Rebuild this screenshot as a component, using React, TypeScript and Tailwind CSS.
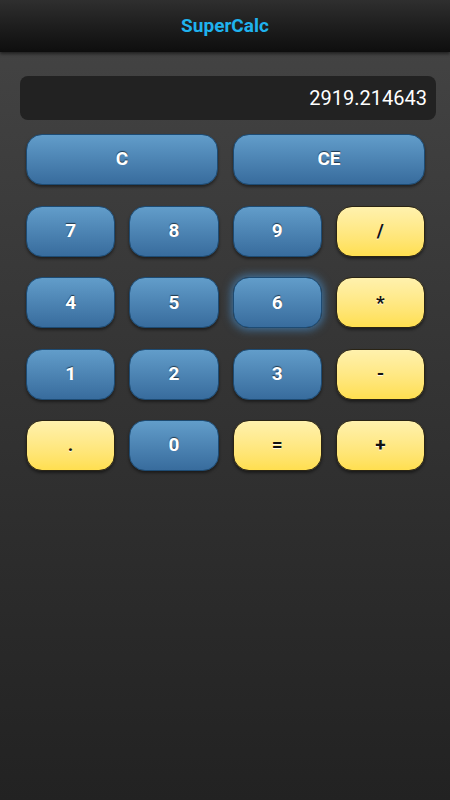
import React from "react"

type Key = { label: string; kind: "blue" | "yellow"; focused?: boolean }

const rows: Key[][] = [
    [{ label: "7", kind: "blue" }, { label: "8", kind: "blue" }, { label: "9", kind: "blue" }, { label: "/", kind: "yellow" }],
    [{ label: "4", kind: "blue" }, { label: "5", kind: "blue" }, { label: "6", kind: "blue", focused: true }, { label: "*", kind: "yellow" }],
    [{ label: "1", kind: "blue" }, { label: "2", kind: "blue" }, { label: "3", kind: "blue" }, { label: "-", kind: "yellow" }],
    [{ label: ".", kind: "yellow" }, { label: "0", kind: "blue" }, { label: "=", kind: "yellow" }, { label: "+", kind: "yellow" }],
]

function CalcButton({ label, kind, focused }: Key) {
    const base = "h-[51px] w-full rounded-[16px] text-[19px] font-bold flex items-center justify-center"
    if (kind === "yellow") {
        return (
            <button className={`${base} border border-[#2a2414] bg-gradient-to-b from-[#fff1ad] to-[#ffdf4f] text-[#111] shadow-[0_2px_3px_rgba(0,0,0,0.45)] [text-shadow:0_1px_0_rgba(255,255,255,0.8)]`}>
                {label}
            </button>
        )
    }
    return (
        <button
            className={`${base} border border-[#1d4b73] bg-gradient-to-b from-[#629dca] to-[#386c9d] text-white [text-shadow:0_-1px_1px_rgba(0,0,0,0.6)] ${
                focused ? "shadow-[0_0_8px_2px_rgba(70,150,220,0.6)]" : "shadow-[0_2px_3px_rgba(0,0,0,0.45)]"
            }`}
        >
            {label}
        </button>
    )
}

export default function App() {
    return (
        <div className="w-[450px] h-[800px] flex flex-col font-['Roboto',sans-serif] bg-gradient-to-b from-[#454545] to-[#222222]">
            {/* ── action bar ─────────────────────────────── */}
            <div className="h-[52px] shrink-0 flex items-center justify-center bg-gradient-to-b from-[#2f2f2f] to-[#0e0e0e] shadow-[0_2px_3px_rgba(0,0,0,0.5)]">
                <span className="text-[19px] font-bold text-[#1fb2ee]">SuperCalc</span>
            </div>

            {/* display */}
            <div className="pl-[20px] pr-[14px] pt-[24px]">
                <div className="h-[44px] rounded-[8px] bg-[#222222] flex items-center justify-end pr-[9px]">
                    <span className="text-[20px] text-white">2919.214643</span>
                </div>
            </div>

            <div className="pl-[26px] pr-[25px]">
                {/* clear row */}
                <div className="grid grid-cols-2 gap-[15px] mt-[14px]">
                    <CalcButton label="C" kind="blue" />
                    <CalcButton label="CE" kind="blue" />
                </div>

                {/* keypad */}
                <div className="flex flex-col gap-[20.3px] mt-[21px]">
                    {rows.map((row, i) => (
                        <div key={i} className="grid grid-cols-4 gap-[14px]">
                            {row.map((k) => (
                                <CalcButton key={k.label} {...k} />
                            ))}
                        </div>
                    ))}
                </div>
            </div>
        </div>
    )
}
